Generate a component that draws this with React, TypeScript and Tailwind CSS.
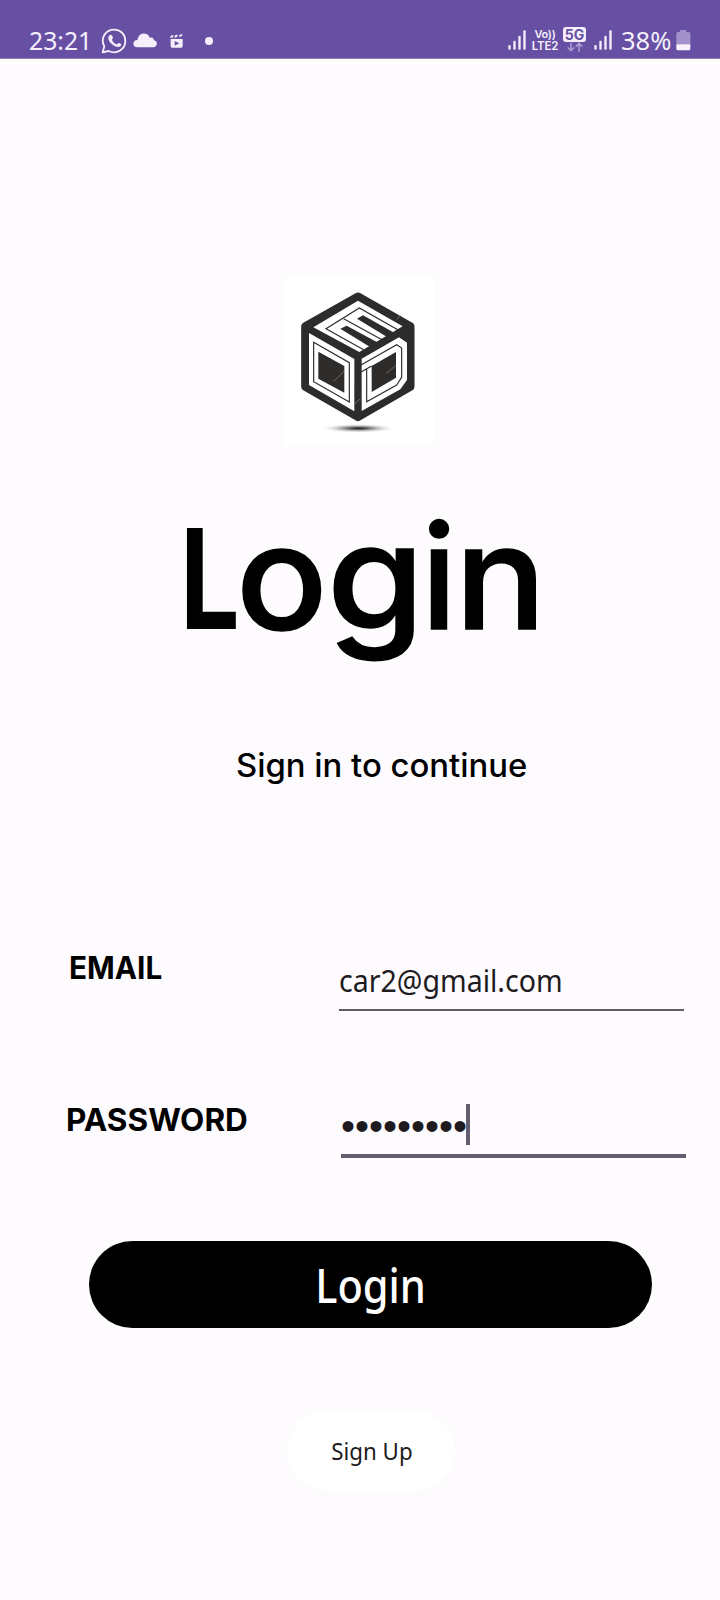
import React from "react";

function Signal() {
  return (
    <svg className="h-5 w-[19px]" viewBox="0 0 57 60" fill="#f5effb">
      <rect x="1" y="45" width="7" height="14" rx="3" />
      <rect x="16" y="32" width="7" height="27" rx="3" />
      <rect x="31" y="17" width="7" height="42" rx="3" />
      <rect x="46" y="1" width="7" height="58" rx="3" />
    </svg>
  );
}

function StatusBar() {
  return (
    <header className="flex h-[59px] items-start border-b border-[#8d7fae] bg-[#6750a4] pl-[29px] font-['Noto_Sans',sans-serif] text-[#f5effb]">
      <div className="mt-[25px] w-[72px]">
        <span className="block origin-left scale-x-[0.95] whitespace-nowrap text-[26px] leading-[30px]">23:21</span>
      </div>
      <svg className="mt-7 h-[26px] w-[26px]" viewBox="0 0 78 78" fill="none" stroke="#f5effb" strokeWidth="5.5">
        <path d="M5 73 L10 55 C-3 31 13 5 40 5 C59 5 73 20 73 39 C73 63 48 81 23 69 Z" strokeLinejoin="round" />
        <path d="M26 22 C30 18 33 21 36 29 C36 32 32 34 33 36 C36 43 41 47 46 49 C49 50 51 44 54 45 C63 49 62 50 58 55 C48 63 22 45 22 30 C22 26 24 24 26 22 Z" fill="#f5effb" stroke="none" />
      </svg>
      <svg className="ml-[6px] mt-[33px] h-[15px] w-6" viewBox="0 0 72 45" fill="#f5effb">
        <path d="M14 43 C-4 43 -3 21 14 20 C16 -3 45 -4 50 14 C61 12 62 19 63 22 C76 24 74 43 60 43 Z" />
      </svg>
      <svg className="ml-[13px] mt-[34px] h-[14px] w-[14px]" viewBox="0 0 42 42">
        <path d="M2 5 L11 3 L8 11 L1 11Z M16 3 L24 2 L20 10 L12 11Z M29 2 L38 0 L35 7 L26 9Z" fill="#f5effb" />
        <path fillRule="evenodd" d="M2 15 H38 V37 Q38 41 34 41 H6 Q2 41 2 37Z M14 21 V35 L28 28Z" fill="#f5effb" />
      </svg>
      <span className="ml-[21px] mt-[37px] h-2 w-2 rounded-full bg-[#f5effb]" />

      <div className="ml-auto flex items-start pr-[29px]">
        <span className="mt-[30px]"><Signal /></span>
        <div className="ml-[4px] mt-[29px] flex w-[28px] flex-col items-center font-['Inter',sans-serif] font-semibold">
          <span className="text-[11px] leading-[11px] tracking-tight">Vo))</span>
          <span className="text-[11.5px] leading-[12px] tracking-[-0.2px]">LTE2</span>
        </div>
        <div className="ml-[4px] mt-[27px] flex w-[23px] flex-col items-center">
          <span className="h-[15px] w-[23px] rounded-[3px] bg-[#f5effb] text-center font-['Inter',sans-serif] text-[14px] font-bold leading-[15px] text-[#6750a4]">5G</span>
          <svg className="h-[10px] w-[16px]" viewBox="0 0 48 30" fill="none" stroke="#a999d0" strokeWidth="5">
            <path d="M12 2 V26 M2 16 L12 26 L22 16 M36 29 V5 M26 14 L36 4 L46 14" />
          </svg>
        </div>
        <span className="ml-[8px] mt-[30px]"><Signal /></span>
        <div className="ml-[8px] mt-[25px] w-[52px]">
          <span className="block origin-left scale-x-[0.98] whitespace-nowrap text-[26px] leading-[30px]">38%</span>
        </div>
        <svg className="ml-[3px] mt-[30px] h-[21px] w-[15px]" viewBox="0 0 45 63">
          <path d="M6 6 H12 V3 Q12 0 15 0 H28 Q31 0 31 3 V6 H38 Q43 6 43 11 V43 H1 V11 Q1 6 6 6Z" fill="#a291cb" />
          <path d="M1 43 H43 V57 Q43 61 38 61 H6 Q1 61 1 57Z" fill="#f8f3fd" />
        </svg>
      </div>
    </header>
  );
}

function Logo() {
  return (
    <div className="ml-[284px] mt-[218px] h-[168px] w-[150px] bg-white">
      <svg className="h-full w-full" viewBox="42 36 450 504">
        <defs>
          <radialGradient id="shadow">
            <stop offset="0" stopColor="#111" />
            <stop offset="0.3" stopColor="#555" stopOpacity="0.8" />
            <stop offset="1" stopColor="#fff" stopOpacity="0" />
          </radialGradient>
        </defs>
        <ellipse cx="265" cy="490" rx="114" ry="14" fill="url(#shadow)" />
        <path d="M264 95 L421 184 V365 L264 456 L106 365 V184 Z" fill="#2d2c2b" stroke="#2d2c2b" strokeWidth="25" strokeLinejoin="round" />
        <g fill="#fff">
          <path d="M130 187 L264 107 L398 184 L268 261 Z" />
          <path d="M117 204 L253 282 V439 L117 360 Z" />
          <path d="M275 281 L387 217 L411 233 V345 L391 373 L275 438 Z" />
        </g>
        <g fill="#2d2c2b">
          <path d="M261 161 L279 151 L375 205 L355 218 Z" />
          <path d="M211 191 L230 182 L330 236 L304 248 Z" />
          <path d="M145 260 L223 303 V383 L145 341 Z" />
          <path d="M305 303 L378 261 V338 L305 381 Z" />
        </g>
        <g fill="none" stroke="#2d2c2b" strokeWidth="3.5">
          <path d="M281 254 L168 191 L268 129 L386 196 M221 161 L336 224" />
          <path d="M131 232 L238 293 V411 L131 350 Z" />
          <path d="M273 300 L380 239 L395 249 V337 L380 360 L290 410 V312 M273 321 L305 303" />
        </g>
        <g stroke="#6b6a69" strokeWidth="3">
          <path d="M190 350 L223 318 M348 326 L378 301 M379 164 L391 152 M255 416 L271 401" />
        </g>
      </svg>
    </div>
  );
}

export default function App() {
  return (
    <div className="flex h-[1600px] w-[720px] flex-col overflow-hidden bg-[#fefbff] text-black">
      <StatusBar />
      <Logo />
      <h1 className="ml-[180px] mt-[44px] h-[180px] whitespace-nowrap font-['Inter',sans-serif] text-[139px] font-medium leading-[180px] [-webkit-text-stroke:1.5px_black]">
        <span className="inline-block w-[56px] origin-left scale-x-[0.76] font-bold [-webkit-text-stroke:0px]">L</span>
        <span className="inline-block w-[91px] origin-[0_139px] scale-x-[1.09] scale-y-[1.045]">o</span>
        <span className="inline-block w-[94.5px] origin-[0_139px] scale-x-[1.13] scale-y-[1.05]">g</span>
        <span className="inline-block w-[33px] origin-[0_139px] scale-y-[1.045]">i</span>
        <span className="inline-block w-[90px] origin-[0_139px] scale-x-[1.09] scale-y-[1.045]">n</span>
      </h1>
      <p className="ml-[236px] mt-[75px] h-[44px] whitespace-nowrap font-['Inter',sans-serif] text-[32px] font-medium leading-[44px]">
        <span className="inline-block origin-left scale-x-[1.026]">Sign in to continue</span>
      </p>

      <form className="flex flex-col">
        <div className="mt-[158px] flex h-[65px] items-start">
          <label className="ml-[69px] mt-[2px] w-[270px] font-['Inter',sans-serif] text-[31px] font-bold leading-[40px]">
            <span className="inline-block origin-left scale-x-[0.96]">EMAIL</span>
          </label>
          <div className="h-[65px] w-[345px] border-b-2 border-[#625b66] pt-[14px] font-['Noto_Sans',sans-serif] text-[31px] leading-[40px] text-[#1d1b20]">
            <span className="inline-block origin-left scale-x-[0.92] whitespace-nowrap">car2@gmail.com</span>
          </div>
        </div>
        <div className="mt-[87px] flex h-[60px] items-start">
          <label className="ml-[66px] mt-[2px] w-[275px] font-['Inter',sans-serif] text-[31px] font-bold leading-[40px]">
            <span className="inline-block origin-left scale-x-[1.017]">PASSWORD</span>
          </label>
          <div className="flex h-[60px] w-[345px] items-start border-b-4 border-[#645d70] pt-[6px] text-[#1d1b20]">
            <span className="mt-[2px] w-[125px] whitespace-nowrap font-['Liberation_Sans',sans-serif] text-[40px] leading-[40px]">•••••••••</span>
            <span className="h-[41px] w-1 bg-[#645d70]" />
          </div>
        </div>
        <button type="button" className="ml-[89px] mt-[83px] h-[87px] w-[563px] rounded-full bg-black pt-px font-['Noto_Sans',sans-serif] text-[47px] font-medium leading-[85px] text-white">
          <span className="inline-block scale-x-[0.885]">Login</span>
        </button>
        <button type="button" className="ml-[287px] mt-[84px] h-[78px] w-[168px] rounded-full bg-white pl-px font-['Noto_Sans',sans-serif] text-[23px] leading-[78px] text-[#1d1b20]">
          <span className="inline-block scale-x-[0.97]">Sign Up</span>
        </button>
      </form>
    </div>
  );
}
